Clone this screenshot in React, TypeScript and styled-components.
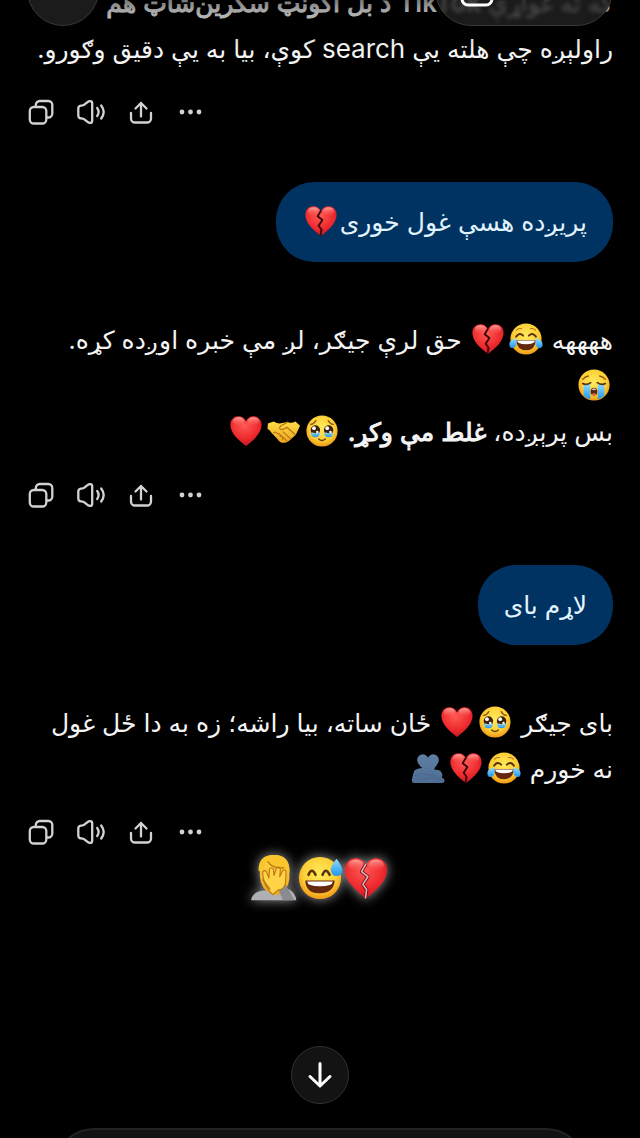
import React from "react";
import styled, { createGlobalStyle } from "styled-components";

const GlobalStyle = createGlobalStyle`
  * { box-sizing: border-box; }
  body { margin: 0; background: #000; }
`;

const Page = styled.div`
  position: relative;
  display: flex;
  flex-direction: column;
  min-height: 100vh;
  overflow: hidden;
  background: #000;
  color: #f4f4f4;
  font-family: Inter, "DejaVu Sans", sans-serif;
`;

const TopBar = styled.header`
  position: absolute;
  top: -46px;
  left: 0;
  right: 0;
  z-index: 1;
  display: flex;
  justify-content: space-between;
  height: 96px;
  padding: 0 27px;
  background: linear-gradient(rgba(0, 0, 0, 0.8) 30%, rgba(0, 0, 0, 0.3) 60%, transparent);
`;

const GlassButton = styled.button<{ $wide?: boolean }>`
  display: flex;
  align-items: flex-end;
  width: ${(p) => (p.$wide ? 178 : 72)}px;
  height: 72px;
  padding: 0 0 18px 24px;
  border: 1px solid #383838;
  border-radius: 36px;
  background: rgba(38, 38, 38, 0.7);
  backdrop-filter: blur(2px);
`;

const Thread = styled.main`
  display: flex;
  flex: 1;
  flex-direction: column;
  margin-top: -20px;
  padding: 0 27px;
`;

const Reply = styled.p`
  margin: 0;
  font-size: 25px;
  line-height: 46px;
`;

const Latin = styled.span<{ $bold?: boolean }>`
  font-size: 26px;
  font-weight: ${(p) => (p.$bold ? 600 : 400)};
  line-height: 1;
`;

const Strong = styled.strong`
  font-weight: 400;
  -webkit-text-stroke: 1px currentColor;
`;

const Bubble = styled.p`
  align-self: flex-end;
  margin: 54px 0 55px;
  padding: 17px 26px;
  border-radius: 38px;
  background: #003362;
  color: #e2f5ff;
  font-size: 25px;
  line-height: 46px;
`;

const Actions = styled.div`
  display: flex;
  gap: 18px;
  margin-top: 24px;
`;

const IconButton = styled.button`
  display: flex;
  width: 32px;
  height: 32px;
  padding: 0;
  border: 0;
  background: none;
  color: #d2d2d2;
`;

const Reaction = styled.div`
  display: flex;
  justify-content: center;
  margin-top: 7px;
  filter: drop-shadow(0 0 6px rgba(255, 255, 255, 0.6));
`;

const EmojiSvg = styled.svg<{ $large?: boolean }>`
  width: ${(p) => (p.$large ? 46 : 34)}px;
  height: ${(p) => (p.$large ? 46 : 34)}px;
  margin: 0 ${(p) => (p.$large ? 0 : 2)}px;
  vertical-align: -7px;
`;

const Dock = styled.footer`
  display: flex;
  flex-direction: column;
  align-items: center;
  gap: 24px;
`;

const ScrollButton = styled.button`
  display: flex;
  align-items: center;
  justify-content: center;
  width: 58px;
  height: 58px;
  padding: 0;
  border: 1px solid #303030;
  border-radius: 50%;
  background: #131313;
`;

const ComposerClip = styled.div`
  align-self: stretch;
  height: 10px;
  padding: 0 54px;
  overflow: hidden;
`;

const Composer = styled.div`
  height: 80px;
  border: 2px solid #232323;
  border-radius: 40px;
  background: #131313;
`;

const Defs = styled.svg`
  position: absolute;
  width: 0;
  height: 0;
`;

const Gradients = () => (
  <Defs aria-hidden="true">
    <defs>
      <radialGradient id="face" cx="0.5" cy="0.4" r="0.62">
        <stop offset="0" stopColor="#ffea5c" />
        <stop offset="0.65" stopColor="#fdcf36" />
        <stop offset="1" stopColor="#ef9212" />
      </radialGradient>
      <radialGradient id="red" cx="0.45" cy="0.3" r="0.75">
        <stop offset="0" stopColor="#ff5a55" />
        <stop offset="0.6" stopColor="#ee2a2e" />
        <stop offset="1" stopColor="#bd1120" />
      </radialGradient>
      <linearGradient id="shine" x1="0" y1="0" x2="0" y2="1">
        <stop offset="0" stopColor="#ffd0c8" stopOpacity="0.7" />
        <stop offset="1" stopColor="#ff6b64" stopOpacity="0" />
      </linearGradient>
      <linearGradient id="tear" x1="0" y1="0" x2="0" y2="1">
        <stop offset="0" stopColor="#8fdcff" />
        <stop offset="1" stopColor="#2196ea" />
      </linearGradient>
      <linearGradient id="skin" x1="0" y1="0" x2="0" y2="1">
        <stop offset="0" stopColor="#ffdc48" />
        <stop offset="1" stopColor="#eda51e" />
      </linearGradient>
      <linearGradient id="slate" gradientUnits="userSpaceOnUse" x1="0" y1="3" x2="0" y2="34">
        <stop offset="0" stopColor="#5f7fa5" />
        <stop offset="1" stopColor="#4f6d92" />
      </linearGradient>
    </defs>
  </Defs>
);

type Kind = "heart" | "broken" | "joy" | "sob" | "moved" | "shake" | "hug" | "sweat" | "palm";

const heartPath =
  "M18 34C9 27 1.500 20 1.500 11.500C1.500 6 5.500 2.500 10 2.500C13.500 2.500 16.500 4.500 18 8C19.500 4.500 22.500 2.500 26 2.500C30.500 2.500 34.500 6 34.500 11.500C34.500 20 27 27 18 34Z";

const HeartShape = () => (
  <>
    <path d={heartPath} fill="url(#red)" />
    <ellipse cx="10" cy="8" rx="6" ry="4.500" fill="url(#shine)" />
    <ellipse cx="26" cy="8" rx="6" ry="4.500" fill="url(#shine)" />
  </>
);

const Face = () => <circle cx="18" cy="18" r="16.500" fill="url(#face)" />;

const crackPath = "M18 7L14.500 13L19.500 17L15.500 23L18.500 27L17.500 34";

const drawings: Record<Kind, (large?: boolean) => React.ReactNode> = {
  heart: () => <HeartShape />,
  broken: (large) => (
    <>
      <HeartShape />
      <g fill="none" strokeLinejoin="round">
        <path d={crackPath} stroke={large ? "#7d0d18" : "#3a060c"} strokeWidth={large ? 2.6 : 2} />
        {large && <path d={crackPath} stroke="#d9b9b9" strokeWidth="1.200" />}
      </g>
    </>
  ),
  joy: () => (
    <>
      <Face />
      <path d="M8 8.500Q10 6.500 13 7M28 8.500Q26 6.500 23 7" stroke="#b1701c" strokeWidth="1.200" fill="none" strokeLinecap="round" />
      <path d="M7.500 15.500Q11 10.500 15 14.500M28.500 15.500Q25 10.500 21 14.500" stroke="#5b3209" strokeWidth="2" fill="none" strokeLinecap="round" />
      <path d="M7.500 19H28.500Q28 29.500 18 30Q8 29.500 7.500 19Z" fill="#65270d" />
      <path d="M8.500 19.500H27.500Q27 23.500 18 23.500T8.500 19.500Z" fill="#fff" />
      <path d="M8 17.500C4 18 0 20 .5 24.500C1 28.500 6 28.500 7.500 25C8.500 22.500 8 20 8 17.500Z" fill="url(#tear)" />
      <path d="M28 17.500C32 18 36 20 35.500 24.500C35 28.500 30 28.500 28.500 25C27.500 22.500 28 20 28 17.500Z" fill="url(#tear)" />
    </>
  ),
  sob: () => (
    <>
      <Face />
      <path d="M7 17H14V33Q10 32 7 29.500ZM22 17H29V29.500Q26 32 22 33Z" fill="url(#tear)" />
      <path d="M6 12Q8.500 9 12 8.500M30 12Q27.500 9 24 8.500" stroke="#8a5314" strokeWidth="1.400" fill="none" strokeLinecap="round" />
      <path d="M6 16.500Q10 18.500 14.500 15.500M30 16.500Q26 18.500 21.500 15.500" stroke="#5b3209" strokeWidth="1.800" fill="none" strokeLinecap="round" />
      <ellipse cx="18" cy="25" rx="3.600" ry="4.200" fill="#5b2a0c" />
      <path d="M15.500 23Q18 20.500 20.500 23Z" fill="#fff" />
      <path d="M15.500 28Q18 25.500 20.500 28Q18 30 15.500 28Z" fill="#e46a5c" />
    </>
  ),
  moved: () => (
    <>
      <Face />
      <path d="M6 11Q9.500 10.500 11.500 7M30 11Q26.500 10.500 24.500 7" stroke="#8a5314" strokeWidth="1.400" fill="none" strokeLinecap="round" />
      <path d="M6 20H16Q15.500 24.500 11 24.500T6 20ZM20 20H30Q29.500 24.500 25 24.500T20 20Z" fill="url(#tear)" />
      <circle cx="11" cy="17" r="5" fill="#3b2110" />
      <circle cx="25" cy="17" r="5" fill="#3b2110" />
      <circle cx="9.500" cy="15" r="2" fill="#fff" />
      <circle cx="23.500" cy="15" r="2" fill="#fff" />
      <circle cx="13" cy="19" r="1.300" fill="#fff" />
      <circle cx="27" cy="19" r="1.300" fill="#fff" />
      <path d="M7.500 20Q11 22.500 14.500 20M21.500 20Q25 22.500 28.500 20" stroke="#8edcf8" strokeWidth="1.500" fill="none" />
      <path d="M14.500 26.500Q18 29.500 21.500 26.500" stroke="#6a3a0c" strokeWidth="1.500" fill="none" strokeLinecap="round" />
    </>
  ),
  shake: () => (
    <>
      <path d="M1 10L7 8Q12 11 16 9.500L22 8.500Q26 10.500 30 8L35 12.500L31 21Q29 24 25.500 26.500Q21 31 18 30.500Q14 31 11.500 27L5 20Q3 17 .5 15.500Z" fill="url(#skin)" />
      <path d="M22 8.500L15 12.500Q12 15 14.500 16.500Q17 17 21 14L30 22M17 19L25 26M14 22L21 28.500M7 20Q10 18 11 21Q14 20 14 23.500Q17 23.500 16.500 27" fill="none" stroke="#b77412" strokeWidth="1.200" strokeLinecap="round" strokeLinejoin="round" />
    </>
  ),
  hug: () => (
    <>
      <g fill="url(#slate)">
        <circle cx="12.500" cy="9.500" r="6" />
        <circle cx="23.500" cy="9.500" r="6" />
        <path d="M7.500 12.500L18 9L28.500 12.500Q26.500 17 25 18V20Q31 19.500 32.500 23Q34 26 32.500 28Q36 29 35.500 32Q35 34 31 34H3Q.5 34 1 30L3 22Q4 18.500 12 18Q9 16 7.500 12.500Z" />
      </g>
      <path d="M4 26Q10 23 18 25L28 27M13 30L22 28L32 30" stroke="#466388" strokeWidth="0.800" fill="none" />
    </>
  ),
  sweat: () => (
    <>
      <Face />
      <path d="M9 15.500Q11.500 9 14.500 15.500M20 15.500Q22.500 9 25.500 15.500" stroke="#5b3209" strokeWidth="2" fill="none" strokeLinecap="round" />
      <path d="M6.500 20H29.500Q29 29.500 18 30T6.500 20Z" fill="#65270d" />
      <path d="M8 20.800H28Q28 24.500 18 24.500T8 20.800Z" fill="#fff" />
      <path d="M31 3Q26 9 26.500 12A4.500 4.500 0 0 0 35.500 12Q35.500 9 31 3Z" fill="url(#tear)" />
    </>
  ),
  palm: () => (
    <>
      <path d="M0 35.500Q1 29.500 8 28L24 27L30 27Q35 30 35.500 35.500Z" fill="#aeb0b3" />
      <path d="M7 11Q7 0 18 0T30 11V19Q29 27 22 31Q17 32 12 28Q6 23 7 11Z" fill="url(#skin)" />
      <path d="M6 13Q5 0 18 0Q31 0 30 14L27 10Q17 11 13 5Q12 9 6 13Z" fill="#fbc52e" />
      <path d="M21 26L27 23L34 35.500H25Z" fill="#898b90" />
      <path d="M9 14Q10 11 12 13L14 18L14.500 11Q16 9 17.500 11L18 16L20 10Q22 8.500 23 11L22.500 17L25 12Q27 11 27.500 13L27 22Q26 27 21 27.500L17 31Q10 25 9 14Z" fill="#ffd348" stroke="#bf7a14" strokeWidth="0.900" strokeLinejoin="round" />
      <path d="M13 5Q17 11 26 10M9 19L15 27" stroke="#b87515" strokeWidth="1" fill="none" />
    </>
  ),
};

const labels: Record<Kind, string> = {
  heart: "❤️",
  broken: "💔",
  joy: "😂",
  sob: "😭",
  moved: "🥹",
  shake: "🤝",
  hug: "🫂",
  sweat: "😅",
  palm: "🤦",
};

const Emoji = ({ kind, large }: { kind: Kind; large?: boolean }) => (
  <EmojiSvg $large={large} viewBox="0 0 36 36" role="img" aria-label={labels[kind]}>
    {drawings[kind](large)}
  </EmojiSvg>
);

const Icon = ({ children }: { children: React.ReactNode }) => (
  <svg width="32" height="32" viewBox="0 0 32 32" fill="none" stroke="currentColor" strokeWidth="2.3" strokeLinecap="round" strokeLinejoin="round">
    {children}
  </svg>
);

const MessageActions = () => (
  <Actions>
    <IconButton aria-label="Copy">
      <Icon>
        <rect x="2.800" y="11" width="16.500" height="16.500" rx="4" />
        <path d="M8.800 10.500V9a4 4 0 0 1 4-4h8.500a4 4 0 0 1 4 4v8.500a4 4 0 0 1-4 4h-1.500" />
      </Icon>
    </IconButton>
    <IconButton aria-label="Read aloud">
      <Icon>
        <path d="M1.300 12.500q0-2.600 2.600-2.900l1.600-.2q1.300-.2 2.500-1.200l2.500-2.100q1.200-1 2.600-1q2.100 0 2.100 2.200v17.400q0 2.200-2.100 2.200q-1.400 0-2.600-1l-2.500-2.100q-1.200-1-2.500-1.200l-1.600-.2q-2.600-.3-2.600-2.900z" />
        <path d="M20.200 12q2.800 4 0 8M24.200 9.500q5 6.500 0 13" />
      </Icon>
    </IconButton>
    <IconButton aria-label="Share">
      <Icon>
        <path d="M4 17v5.500a4 4 0 0 0 4 4h12a4 4 0 0 0 4-4V17M14 20.500V7M8.500 12.500L14 7l5.500 5.500" />
      </Icon>
    </IconButton>
    <IconButton aria-label="More">
      <Icon>
        <g fill="currentColor" stroke="none">
          <circle cx="5" cy="16" r="2.400" />
          <circle cx="13.500" cy="16" r="2.400" />
          <circle cx="22" cy="16" r="2.400" />
        </g>
      </Icon>
    </IconButton>
  </Actions>
);

export default function App() {
  return (
    <>
      <GlobalStyle />
      <Gradients />
      <Page>
        <TopBar>
          <GlassButton aria-label="Menu" />
          <GlassButton $wide aria-label="New chat">
            <svg width="34" height="34" viewBox="0 0 34 34" fill="none" stroke="#fff" strokeWidth="3">
              <rect x="2" y="2" width="30" height="30" rx="6" />
            </svg>
          </GlassButton>
        </TopBar>
        <Thread>
          <Reply dir="rtl">
            که ته غواړې <Latin $bold>TikTok</Latin> <Strong>د بل اکونټ سکرین‌شاټ هم</Strong>
            <br />
            راولېږه چې هلته یې <Latin>search</Latin> کوې، بیا به یې دقیق وګورو.
          </Reply>
          <MessageActions />
          <Bubble dir="rtl">
            پریږده هسې غول خوری
            <Emoji kind="broken" />
          </Bubble>
          <Reply dir="rtl">
            ههههه <Emoji kind="joy" />
            <Emoji kind="broken" /> حق لرې جیګر، لږ مې خبره اوږده کړه.
            <br />
            <Emoji kind="sob" />
            <br />
            بس پرېږده، <Strong>غلط مې وکړ.</Strong> <Emoji kind="moved" />
            <Emoji kind="shake" />
            <Emoji kind="heart" />
          </Reply>
          <MessageActions />
          <Bubble dir="rtl">لاړم بای</Bubble>
          <Reply dir="rtl">
            بای جیګر <Emoji kind="moved" />
            <Emoji kind="heart" /> ځان ساته، بیا راشه؛ زه به دا ځل غول
            <br />
            نه خورم <Emoji kind="joy" />
            <Emoji kind="broken" />
            <Emoji kind="hug" />
          </Reply>
          <MessageActions />
          <Reaction>
            <Emoji kind="palm" large />
            <Emoji kind="sweat" large />
            <Emoji kind="broken" large />
          </Reaction>
        </Thread>
        <Dock>
          <ScrollButton aria-label="Scroll to latest">
            <svg width="28" height="28" viewBox="0 0 28 28" fill="none" stroke="#fff" strokeWidth="3" strokeLinecap="round" strokeLinejoin="round">
              <path d="M14 2.500V25M4 15.500L14 25L24 15.500" />
            </svg>
          </ScrollButton>
          <ComposerClip>
            <Composer />
          </ComposerClip>
        </Dock>
      </Page>
    </>
  );
}
